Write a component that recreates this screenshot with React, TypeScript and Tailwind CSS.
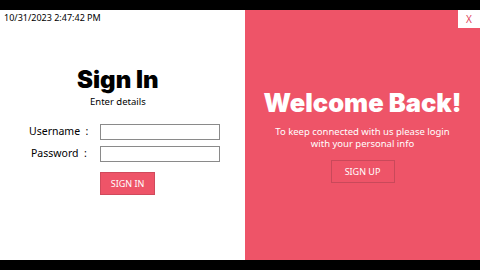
export default function App() {
  return (
    <div className="flex h-[270px] w-[480px] flex-col bg-black pt-[10px] pb-[10px] font-['Noto_Sans',sans-serif]">
      <div className="flex h-[250px] w-full">
        {/* left: sign in */}
        <div className="flex w-[245px] flex-col bg-white">
          <div className="pl-[4px] pt-[2px] text-[9px] leading-[12px] text-black">
            10/31/2023 2:47:42 PM
          </div>
          <div className="ml-[77px] mt-[41px] whitespace-nowrap font-['Inter',sans-serif] text-[24px] font-black leading-[30px] text-black">
            Sign In
          </div>
          <div className="ml-[90px] mt-[1px] text-[9.5px] leading-[12px] text-black">Enter details</div>

          <div className="mt-[16px] flex flex-col gap-[6px]">
            <div className="flex items-center">
              <span className="ml-[29px] w-[71px] text-[10.5px] text-black">Username&nbsp;&nbsp;:</span>
              <input className="h-[16px] w-[120px] border border-[#8a8a8a] bg-white outline-none" />
            </div>
            <div className="flex items-center">
              <span className="ml-[31px] w-[69px] text-[10.5px] text-black">Password&nbsp;&nbsp;:</span>
              <input className="h-[16px] w-[120px] border border-[#8a8a8a] bg-white outline-none" />
            </div>
          </div>

          <button className="ml-[100px] mt-[10px] h-[23px] w-[55px] border border-[#d04a5c] bg-[#ee5468] text-[9px] text-white">
            SIGN IN
          </button>
        </div>

        {/* right: welcome */}
        <div className="relative flex flex-1 flex-col items-center bg-[#ee5468]">
          <button className="absolute right-0 top-0 flex h-[18px] w-[22px] items-center justify-center bg-white text-[10px] text-[#e0475c]">
            X
          </button>
          <div className="mt-[78px] whitespace-nowrap font-['Inter',sans-serif] text-[25.5px] font-black leading-[30px] text-white">
            Welcome Back!
          </div>
          <div className="mt-[8px] text-center text-[9.5px] leading-[12px] text-white">
            To keep connected with us please login
            <br />
            with your personal info
          </div>
          <button className="mt-[10px] h-[23px] w-[64px] border border-[#c9495a] bg-transparent text-[9px] text-white">
            SIGN UP
          </button>
        </div>
      </div>
    </div>
  );
}
